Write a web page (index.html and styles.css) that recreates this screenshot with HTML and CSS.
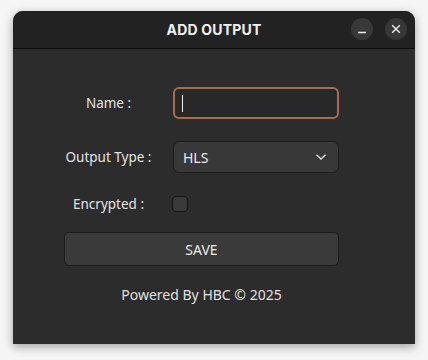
FILE: index.html
```html
<!DOCTYPE html>
<html lang="en">
<head>
  <meta charset="UTF-8" />
  <meta name="viewport" content="width=device-width, initial-scale=1.0"/>
  <title>Add Output</title>
  <link rel="stylesheet" href="styles.css">
</head>
<body>
  <div class="window">
    <div class="titlebar">
      <span class="title">ADD OUTPUT</span>
      <div class="controls">
        <button class="ctl" aria-label="Minimize">
          <svg width="10" height="10" viewBox="0 0 10 10"><path d="M1 8.5h8" stroke="#f0f0f0" stroke-width="1.3"/></svg>
        </button>
        <button class="ctl" aria-label="Close">
          <svg width="10" height="10" viewBox="0 0 10 10"><path d="M1.2 1.2l7.6 7.6M8.8 1.2l-7.6 7.6" stroke="#f0f0f0" stroke-width="1.4"/></svg>
        </button>
      </div>
    </div>

    <div class="content">
      <div class="form">
        <div class="row">
          <div class="label"><label for="name">Name :</label></div>
          <div class="field input"><span class="caret"></span></div>
        </div>

        <div class="row">
          <div class="label"><label>Output Type :</label></div>
          <div class="field select">
            <span>HLS</span>
            <svg width="12" height="8" viewBox="0 0 12 8"><path d="M1.5 1.8l4.5 4.2 4.5-4.2" fill="none" stroke="#e0e0e0" stroke-width="1.4"/></svg>
          </div>
        </div>

        <div class="row check-row">
          <div class="label"><label>Encrypted :</label></div>
          <div class="checkbox"></div>
        </div>

        <button class="save">SAVE</button>

        <p class="footer">Powered By HBC © 2025</p>
      </div>
    </div>
  </div>
</body>
</html>
```

FILE: styles.css
```css
html, body {
  margin: 0;
  padding: 0;
}

body {
  background-color: #f5f5f5;
  font-family: 'Noto Sans', 'Open Sans', sans-serif;
  color: #e4e4e4;
  padding: 11px 13px 0 13px;
  height: 360px;
  box-sizing: border-box;
  overflow: hidden;
}

.window {
  width: 402px;
  height: 333px;
  background-color: #2c2c2c;
  border-radius: 10px 10px 0 0;
  box-shadow: 0 3px 10px rgba(0, 0, 0, 0.35);
  display: flex;
  flex-direction: column;
  overflow: hidden;
}

.titlebar {
  height: 37px;
  background-color: #222222;
  border-bottom: 1px solid #0e0e0e;
  display: flex;
  align-items: center;
  justify-content: center;
  position: relative;
}

.title {
  font-family: 'Inter', 'Open Sans', sans-serif;
  font-weight: 700;
  font-size: 14px;
  color: #f2f2f2;
  letter-spacing: 0.2px;
}

.controls {
  position: absolute;
  right: 8px;
  top: 7px;
  display: flex;
  gap: 12px;
}

.ctl {
  width: 22px;
  height: 22px;
  border-radius: 50%;
  border: none;
  background-color: #383838;
  padding: 0;
  display: flex;
  align-items: center;
  justify-content: center;
}

.content {
  padding: 38px 0 0 51px;
}

.form {
  width: 275px;
  display: flex;
  flex-direction: column;
}

.row {
  display: grid;
  grid-template-columns: 89px 166px;
  column-gap: 20px;
  align-items: center;
  margin-bottom: 22px;
}

.label {
  display: flex;
  justify-content: center;
  white-space: nowrap;
  font-size: 13.5px;
  color: #e4e4e4;
}

.field {
  height: 32px;
  box-sizing: border-box;
  border-radius: 6px;
  display: flex;
  align-items: center;
}

.input {
  background-color: #282828;
  border: 2px solid #a96c52;
  padding-left: 7px;
}

.caret {
  width: 1px;
  height: 17px;
  background-color: #f0f0f0;
}

.select {
  background-color: #383838;
  border: 1px solid #1c1c1c;
  padding: 0 11px 0 9px;
  justify-content: space-between;
  font-size: 14px;
  color: #ececec;
}

.check-row {
  margin-bottom: 19px;
}

.checkbox {
  width: 16px;
  height: 16px;
  box-sizing: border-box;
  border: 1.5px solid #141414;
  border-radius: 4px;
  background-color: #3a3a3a;
  margin-left: -1px;
}

.save {
  height: 34px;
  background-color: #3a3a3a;
  border: 1px solid #1c1c1c;
  border-radius: 5px;
  color: #ececec;
  font-family: 'Noto Sans', 'Open Sans', sans-serif;
  font-size: 14px;
  padding: 0;
}

.footer {
  margin: 19px 0 0 0;
  text-align: center;
  font-size: 14px;
  color: #e0e0e0;
}
```
